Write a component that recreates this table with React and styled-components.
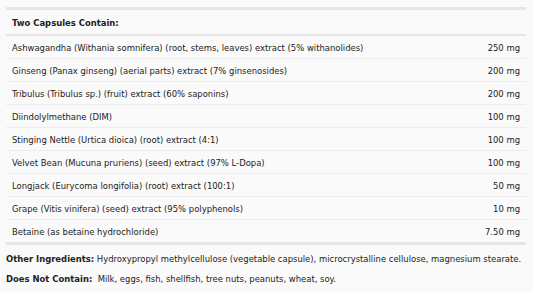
import React from 'react';
import styled, { createGlobalStyle } from 'styled-components';

const GlobalStyle = createGlobalStyle`
  body {
    margin: 0;
    background: #fafafa;
    font-family: "DejaVu Sans Condensed", "DejaVu Sans", sans-serif;
    font-stretch: condensed;
    color: #222;
  }
`;

const Page = styled.div`
  padding: 7px 7px 0 6px;
`;

const Table = styled.table`
  width: 100%;
  border-collapse: collapse;
  border-top: 3px solid #e6e6e8;
  border-bottom: 3px solid #e6e6e8;
  font-size: 9.4px;
`;

const Head = styled.th`
  text-align: left;
  font-weight: bold;
  padding: 7px 6px 6px;
  border-bottom: 2px solid #e6e6e8;
`;

const Row = styled.tr`
  border-bottom: 1px solid #ececee;
  &:last-child {
    border-bottom: none;
  }
`;

const Cell = styled.td`
  padding: 0 6px;
  height: 22px;
  text-align: ${({ $right }) => ($right ? 'right' : 'left')};
  white-space: nowrap;
`;

const Note = styled.p`
  margin: 0;
  font-size: 9.4px;
  line-height: 20px;
  white-space: nowrap;
  &:first-of-type {
    margin-top: 4px;
  }
`;

const Label = styled.b`
  font-weight: bold;
`;

const rows = [
  ['Ashwagandha (Withania somnifera) (root, stems, leaves) extract (5% withanolides)', '250 mg'],
  ['Ginseng (Panax ginseng) (aerial parts) extract (7% ginsenosides)', '200 mg'],
  ['Tribulus (Tribulus sp.) (fruit) extract (60% saponins)', '200 mg'],
  ['Diindolylmethane (DIM)', '100 mg'],
  ['Stinging Nettle (Urtica dioica) (root) extract (4:1)', '100 mg'],
  ['Velvet Bean (Mucuna pruriens) (seed) extract (97% L-Dopa)', '100 mg'],
  ['Longjack (Eurycoma longifolia) (root) extract (100:1)', '50 mg'],
  ['Grape (Vitis vinifera) (seed) extract (95% polyphenols)', '10 mg'],
  ['Betaine (as betaine hydrochloride)', '7.50 mg'],
];

export default function App() {
  return (
    <Page>
      <GlobalStyle />
      <Table>
        <thead>
          <tr>
            <Head colSpan={2}>Two Capsules Contain:</Head>
          </tr>
        </thead>
        <tbody>
          {rows.map(([name, amount]) => (
            <Row key={name}>
              <Cell>{name}</Cell>
              <Cell $right>{amount}</Cell>
            </Row>
          ))}
        </tbody>
      </Table>
      <Note>
        <Label>Other Ingredients:</Label> Hydroxypropyl methylcellulose (vegetable capsule), microcrystalline cellulose, magnesium stearate.
      </Note>
      <Note>
        <Label>Does Not Contain:</Label>&nbsp; Milk, eggs, fish, shellfish, tree nuts, peanuts, wheat, soy.
      </Note>
    </Page>
  );
}
